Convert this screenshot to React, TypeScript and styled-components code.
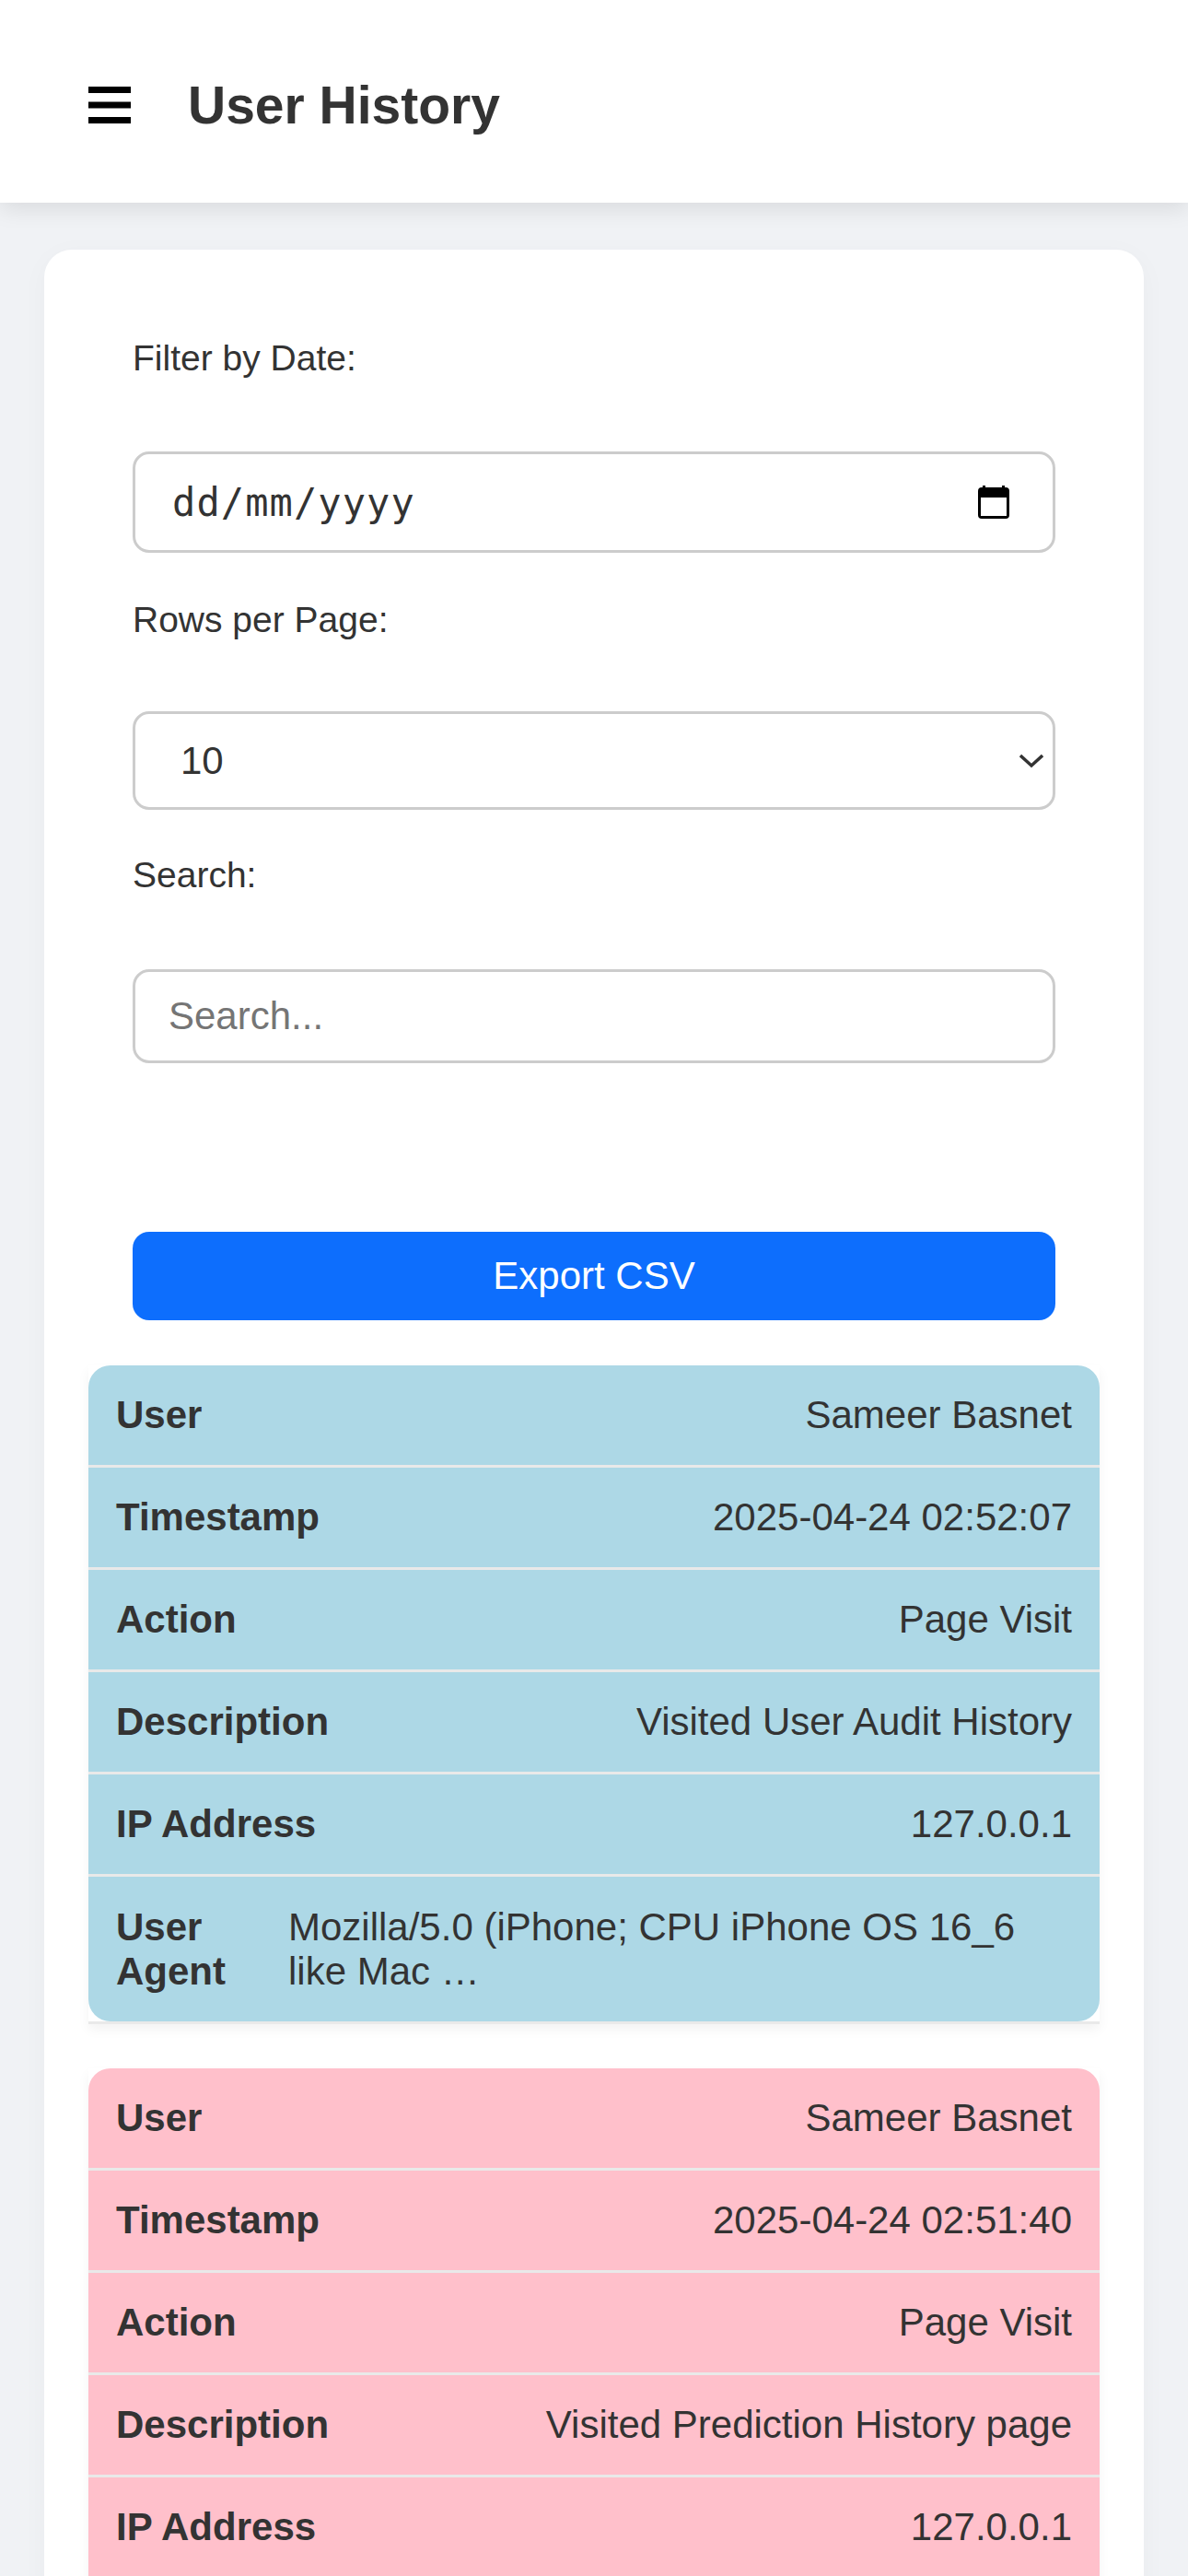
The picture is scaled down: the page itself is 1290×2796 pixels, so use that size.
import React from "react";
import styled, { createGlobalStyle } from "styled-components";

const GlobalStyle = createGlobalStyle`
  html, body {
    margin: 0;
    padding: 0;
    background: #f0f2f5;
    font-family: "Liberation Sans", Arial, sans-serif;
    color: #333;
  }
  * { box-sizing: border-box; }
`;

const Page = styled.div`
  width: 1290px;
  height: 2796px;
  overflow: hidden;
`;

const Header = styled.header`
  display: flex;
  align-items: center;
  height: 220px;
  padding: 8px 0 0 96px;
  gap: 62px;
  background: #fff;
  box-shadow: 0 6px 24px rgba(0, 0, 0, 0.1);
`;

const MenuIcon = styled.svg`
  width: 46px;
  height: 40px;
  display: block;
`;

const Title = styled.h1`
  margin: 0;
  font-size: 57px;
  font-weight: 700;
  color: #333;
`;

const Main = styled.main`
  padding: 51px 48px 0;
`;

const Card = styled.section`
  background: #fff;
  border-radius: 30px;
  padding: 0 48px 48px;
  box-shadow: 0 6px 30px rgba(0, 0, 0, 0.03);
`;

const Filters = styled.div`
  display: flex;
  flex-direction: column;
  padding: 0 48px;
`;

const Label = styled.label<{ $top: number; $gap: number }>`
  display: block;
  margin-top: ${(p) => p.$top}px;
  margin-bottom: ${(p) => p.$gap}px;
  font-size: 39px;
  line-height: 48px;
  color: #333;
`;

const Control = styled.div<{ $height: number; $pad: number }>`
  display: flex;
  align-items: center;
  justify-content: space-between;
  height: ${(p) => p.$height}px;
  padding: 0 ${(p) => p.$pad}px 0 40px;
  border: 3px solid #ccc;
  border-radius: 18px;
  background: #fff;
`;

const DateText = styled.span`
  font-family: "DejaVu Sans Mono", "Liberation Mono", monospace;
  font-size: 42px;
  letter-spacing: 1.1px;
  color: #333;
`;

const SelectText = styled.span`
  font-size: 42px;
  padding-left: 9px;
  color: #333;
`;

const SearchInput = styled.input`
  display: block;
  width: 100%;
  height: 102px;
  padding: 0 36px;
  border: 3px solid #ccc;
  border-radius: 18px;
  background: #fff;
  font-family: inherit;
  font-size: 42px;
  color: #333;
  outline: none;
  &::placeholder {
    color: #757575;
    opacity: 1;
  }
`;

const ExportButton = styled.button`
  display: block;
  width: 100%;
  height: 96px;
  margin-top: 183px;
  border: none;
  border-radius: 18px;
  background: #0d6efd;
  color: #fff;
  font-family: inherit;
  font-size: 42px;
`;

const Records = styled.div`
  display: flex;
  flex-direction: column;
  gap: 48px;
  margin-top: 49px;
`;

const Record = styled.div`
  border-bottom: 3px solid #e9e9e9;
  box-shadow: 0 6px 12px rgba(0, 0, 0, 0.05);
`;

const RecordBody = styled.div<{ $bg: string }>`
  background: ${(p) => p.$bg};
  border-radius: 24px;
  overflow: hidden;
`;

const Row = styled.div`
  display: flex;
  justify-content: space-between;
  align-items: center;
  gap: 30px;
  min-height: 111px;
  padding: 0 30px;
  border-bottom: 3px solid #e9e9e9;
  font-size: 42px;
  line-height: 48px;
  color: #333;
`;

const AgentRow = styled.div`
  display: flex;
  align-items: flex-start;
  gap: 30px;
  padding: 31px 30px 30px;
  font-size: 42px;
  line-height: 48px;
  color: #333;
`;

const Key = styled.span`
  flex: none;
  font-weight: 700;
`;

const AgentKey = styled(Key)`
  width: 157px;
`;

const Value = styled.span`
  flex: none;
  text-align: right;
`;

const AgentValue = styled.span`
  flex: 1;
  text-align: left;
`;

type RecordData = {
  bg: string;
  timestamp: string;
  description: string;
};

const records: RecordData[] = [
  { bg: "#add8e6", timestamp: "2025-04-24 02:52:07", description: "Visited User Audit History" },
  { bg: "#ffc0cb", timestamp: "2025-04-24 02:51:40", description: "Visited Prediction History page" },
];

const App = () => (
  <Page>
    <GlobalStyle />
    <Header>
      <MenuIcon viewBox="0 0 46 40">
        <rect y="0" width="46" height="7" fill="#000" />
        <rect y="16.5" width="46" height="7" fill="#000" />
        <rect y="33" width="46" height="7" fill="#000" />
      </MenuIcon>
      <Title>User History</Title>
    </Header>
    <Main>
      <Card>
        <Filters>
          <Label $top={94} $gap={77}>Filter by Date:</Label>
          <Control $height={110} $pad={47}>
            <DateText>dd/mm/yyyy</DateText>
            <svg width="34" height="36" viewBox="0 0 34 36">
              <path
                fillRule="evenodd"
                fill="#000"
                d="M5 0h3v2h18V0h3v2h1a4 4 0 0 1 4 4v26a4 4 0 0 1-4 4H4a4 4 0 0 1-4-4V6a4 4 0 0 1 4-4h1zM3 13v20h28V13z"
              />
            </svg>
          </Control>
          <Label $top={49} $gap={75}>Rows per Page:</Label>
          <Control $height={107} $pad={10}>
            <SelectText>10</SelectText>
            <svg width="26" height="16" viewBox="0 0 26 16">
              <path d="M1 2l12 11L25 2" fill="none" stroke="#333" strokeWidth="3.5" />
            </svg>
          </Control>
          <Label $top={47} $gap={78}>Search:</Label>
          <SearchInput placeholder="Search..." />
          <ExportButton>Export CSV</ExportButton>
        </Filters>
        <Records>
          {records.map((r) => (
            <Record key={r.timestamp}>
              <RecordBody $bg={r.bg}>
                <Row><Key>User</Key><Value>Sameer Basnet</Value></Row>
                <Row><Key>Timestamp</Key><Value>{r.timestamp}</Value></Row>
                <Row><Key>Action</Key><Value>Page Visit</Value></Row>
                <Row><Key>Description</Key><Value>{r.description}</Value></Row>
                <Row><Key>IP Address</Key><Value>127.0.0.1</Value></Row>
                <AgentRow>
                  <AgentKey>User Agent</AgentKey>
                  <AgentValue>Mozilla/5.0 (iPhone; CPU iPhone OS 16_6 like Mac …</AgentValue>
                </AgentRow>
              </RecordBody>
            </Record>
          ))}
        </Records>
      </Card>
    </Main>
  </Page>
);

export default App;
